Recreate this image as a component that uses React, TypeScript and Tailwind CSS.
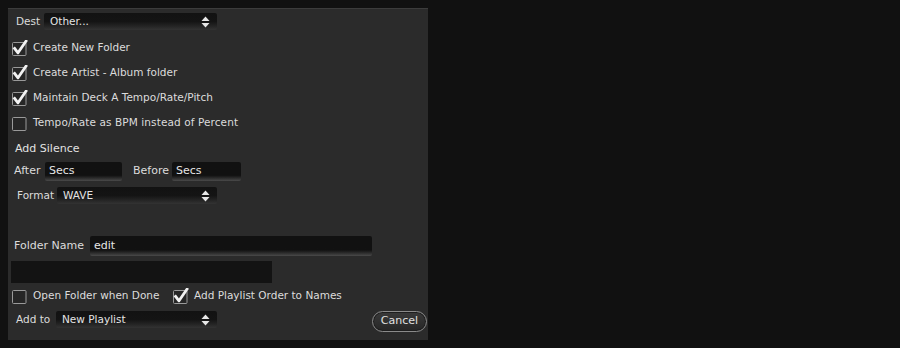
import React from 'react';

const font = { fontFamily: '"DejaVu Sans", "Lucida Grande", Verdana, sans-serif' };

const Arrows = () => (
  <svg width="9" height="12" viewBox="0 0 9 12" className="shrink-0">
    <path d="M4.5 0.5 L8.5 5 H0.5 Z" fill="#e8e8e8" />
    <path d="M4.5 11.5 L8.5 7 H0.5 Z" fill="#e8e8e8" />
  </svg>
);

const Checkbox = ({ checked }: { checked?: boolean }) => (
  <svg width="18" height="16" viewBox="0 0 18 16" className="shrink-0">
    <rect x="0.5" y="2.5" width="13.5" height="13" rx="1" fill="#262626" stroke="#9a9a9a" />
    {checked && (
      <path
        d="M2.6 8.4 L6 12.8 L14 1.2"
        fill="none"
        stroke="#f2f2f2"
        strokeWidth="2.8"
        strokeLinejoin="round"
        strokeLinecap="square"
      />
    )}
  </svg>
);

const Select = ({ value, w }: { value: string; w: string }) => (
  <div
    className={`${w} h-[17px] flex items-center justify-between pl-[6px] pr-[7px] rounded-[2px] text-[#e4e4e4] bg-gradient-to-b from-[#121212] via-[#141414] to-[#333333]`}
  >
    <span>{value}</span>
    <Arrows />
  </div>
);

const Field = ({ value, w, h = 'h-[19px]' }: { value?: string; w: string; h?: string }) => (
  <div
    className={`${w} ${h} flex items-center pl-[4px] rounded-[2px] text-[#e6e6e6] bg-gradient-to-b from-[#111111] from-70% to-[#4a4a4a]`}
  >
    {value}
  </div>
);

export default function App() {
  return (
    <div className="w-[900px] h-[348px] bg-[#111111] pt-[8px] pl-[8px]" style={font}>
      <div className="w-[420px] h-[332px] bg-[#2b2b2b] border-t border-[#3c3c3c] text-[10.5px] text-[#dcdcdc] flex flex-col">
        {/* Dest */}
        <div className="mt-[4px] h-[17px] pl-[8px] flex items-center">
          <span className="w-[28px]">Dest</span>
          <Select value="Other..." w="w-[173px]" />
        </div>

        <div className="h-[5px]" />
        <div className="h-[25px] pl-[4px] flex items-center">
          <Checkbox checked />
          <span className="ml-[3px]">Create New Folder</span>
        </div>
        <div className="h-[25px] pl-[4px] flex items-center">
          <Checkbox checked />
          <span className="ml-[3px]">Create Artist - Album folder</span>
        </div>
        <div className="h-[25px] pl-[4px] flex items-center">
          <Checkbox checked />
          <span className="ml-[3px]">Maintain Deck A Tempo/Rate/Pitch</span>
        </div>
        <div className="h-[25px] pl-[4px] flex items-center">
          <Checkbox />
          <span className="ml-[3px] tracking-[0.1px]">Tempo/Rate as BPM instead of Percent</span>
        </div>

        {/* Add Silence */}
        <div className="mt-[4px] h-[20px] pl-[7px] flex items-center text-[11px] text-[#e2e2e2]">
          Add Silence
        </div>
        <div className="mt-[3px] h-[19px] pl-[6px] flex items-center text-[11px]">
          <span className="w-[31px]">After</span>
          <Field value="Secs" w="w-[77px]" />
          <span className="ml-[11px] w-[39px]">Before</span>
          <Field value="Secs" w="w-[69px]" />
        </div>

        {/* Format */}
        <div className="mt-[6px] h-[17px] pl-[9px] flex items-center">
          <span className="w-[40px]">Format</span>
          <Select value="WAVE" w="w-[160px]" />
        </div>

        {/* Folder name */}
        <div className="mt-[32px] h-[20px] pl-[6px] flex items-center text-[11px]">
          <span className="w-[76px]">Folder Name</span>
          <Field value="edit" w="w-[282px]" h="h-[20px]" />
        </div>
        <div className="mt-[5px] pl-[3px]">
          <div className="w-[261px] h-[22px] bg-[#131313]" />
        </div>

        <div className="mt-[3px] h-[20px] pl-[4px] flex items-center">
          <div className="w-[161px] flex items-center">
            <Checkbox />
            <span className="ml-[3px]">Open Folder when Done</span>
          </div>
          <Checkbox checked />
          <span className="ml-[3px]">Add Playlist Order to Names</span>
        </div>

        {/* Add to */}
        <div className="mt-[5px] h-[21px] pl-[8px] flex items-start">
          <span className="w-[40px] h-[18px] flex items-center">Add to</span>
          <Select value="New Playlist" w="w-[161px]" />
          <button className="ml-auto mr-[1px] w-[55px] h-[21px] rounded-full border border-[#8a8a8a] shadow-[inset_0_0_0_1px_#1e1e1e] bg-gradient-to-b from-[#3a3a3a] to-[#262626] text-[11px] text-[#e0e0e0] flex items-center justify-center">
            Cancel
          </button>
        </div>
      </div>
    </div>
  );
}
